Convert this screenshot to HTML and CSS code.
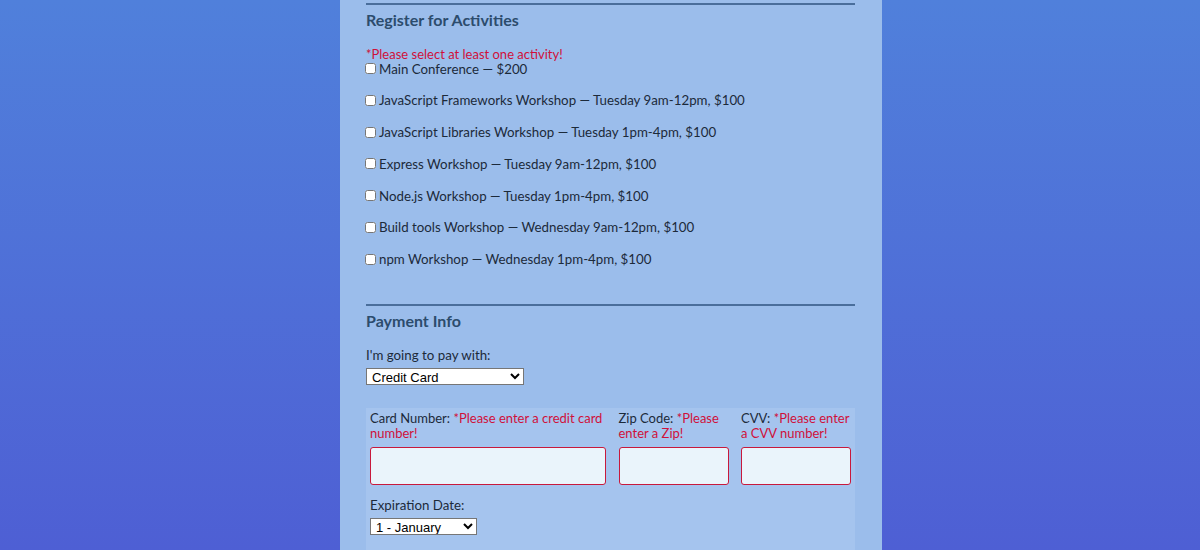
FILE: index.html
```html
<!DOCTYPE html>
<html lang="en">
<head>
<meta charset="utf-8">
<title>Register</title>
<link rel="stylesheet" href="styles.css">
</head>
<body>
<div class="container">
  <section class="section activities">
    <h2 class="legend">Register for Activities</h2>
    <p class="error">*Please select at least one activity!</p>
    <label class="activity"><input type="checkbox"> Main Conference — $200</label>
    <label class="activity"><input type="checkbox"> JavaScript Frameworks Workshop — Tuesday 9am-12pm, $100</label>
    <label class="activity"><input type="checkbox"> JavaScript Libraries Workshop — Tuesday 1pm-4pm, $100</label>
    <label class="activity"><input type="checkbox"> Express Workshop — Tuesday 9am-12pm, $100</label>
    <label class="activity"><input type="checkbox"> Node.js Workshop — Tuesday 1pm-4pm, $100</label>
    <label class="activity"><input type="checkbox"> Build tools Workshop — Wednesday 9am-12pm, $100</label>
    <label class="activity"><input type="checkbox"> npm Workshop — Wednesday 1pm-4pm, $100</label>
  </section>
  <section class="section payment">
    <h2 class="legend">Payment Info</h2>
    <label class="field-label" for="payment">I'm going to pay with:</label>
    <select id="payment" class="pay-select">
      <option>Credit Card</option>
      <option>PayPal</option>
      <option>Bitcoin</option>
    </select>
    <div class="credit-card">
      <div class="card-grid">
        <div class="card-field">
          <label class="card-label">Card Number: <span class="err">*Please enter a credit card number!</span></label>
          <input class="card-input" type="text">
        </div>
        <div class="card-field">
          <label class="card-label">Zip Code: <span class="err">*Please enter a Zip!</span></label>
          <input class="card-input" type="text">
        </div>
        <div class="card-field">
          <label class="card-label">CVV: <span class="err">*Please enter a CVV number!</span></label>
          <input class="card-input" type="text">
        </div>
      </div>
      <label class="field-label exp-label">Expiration Date:</label>
      <select class="exp-select">
        <option>1 - January</option>
        <option>2 - February</option>
        <option>12 - December</option>
      </select>
    </div>
  </section>
</div>
</body>
</html>
```
FILE: styles.css
```css
html, body {
  margin: 0;
  height: 100%;
}
body {
  background: linear-gradient(180deg, #5080db 0%, #4e5fd4 100%);
  font-family: Lato, "Open Sans", sans-serif;
  color: #1c2a3a;
  overflow: hidden;
  padding-left: 22px;
  box-sizing: border-box;
}
.container {
  width: 489px;
  margin: 0 auto;
  padding: 3px 27px 0 26px;
  background: #9bbdeb;
  height: 100%;
  box-sizing: content-box;
}
.section {
  border-top: 2px solid #4a6e9b;
}
.legend {
  margin: 0;
  padding-top: 3px;
  font-size: 16px;
  line-height: 24px;
  font-weight: 700;
  color: #2c4c6d;
}
.error {
  margin: 16.5px 0 0;
  font-size: 13px;
  line-height: 11px;
  color: #d0103a;
}
.activity {
  display: flex;
  align-items: center;
  font-size: 13.3px;
  line-height: 18px;
  height: 18px;
  margin-bottom: 13.8px;
}
.activity input {
  margin: 0 3px 0 -1px;
  width: 11px;
  height: 11px;
}
.activities {
  padding-bottom: 21.5px;
}
.field-label {
  display: block;
  margin-top: 14px;
  font-size: 13.3px;
  line-height: 16px;
}
.pay-select {
  display: block;
  margin-top: 5px;
  width: 158px;
  height: 17px;
  font-family: "Liberation Sans", Arial, sans-serif;
  font-size: 13px;
  padding: 0 0 0 1px;
  border: 1px solid #767676;
  background: #fff;
  color: #000;
}
.credit-card {
  margin-top: 23px;
  background: #a5c4ee;
  padding: 3.5px 4px 20px;
  height: 200px;
}
.card-grid {
  display: grid;
  grid-template-columns: 236px 110px 110px;
  justify-content: space-between;
}
.card-label {
  display: block;
  font-size: 13px;
  line-height: 15px;
  height: 30px;
  color: #1c2a3a;
}
.err {
  color: #d0103a;
}
.card-input {
  display: block;
  box-sizing: border-box;
  width: 100%;
  height: 38px;
  margin-top: 5.5px;
  border: 1px solid #c8193c;
  border-radius: 3px;
  background: #eaf4fb;
}
.exp-label {
  margin-top: 12px;
}
.exp-select {
  display: block;
  margin-top: 5px;
  width: 107px;
  height: 17px;
  font-family: "Liberation Sans", Arial, sans-serif;
  font-size: 13px;
  padding: 0 0 0 1px;
  border: 1px solid #767676;
  background: #fff;
  color: #000;
}
```
